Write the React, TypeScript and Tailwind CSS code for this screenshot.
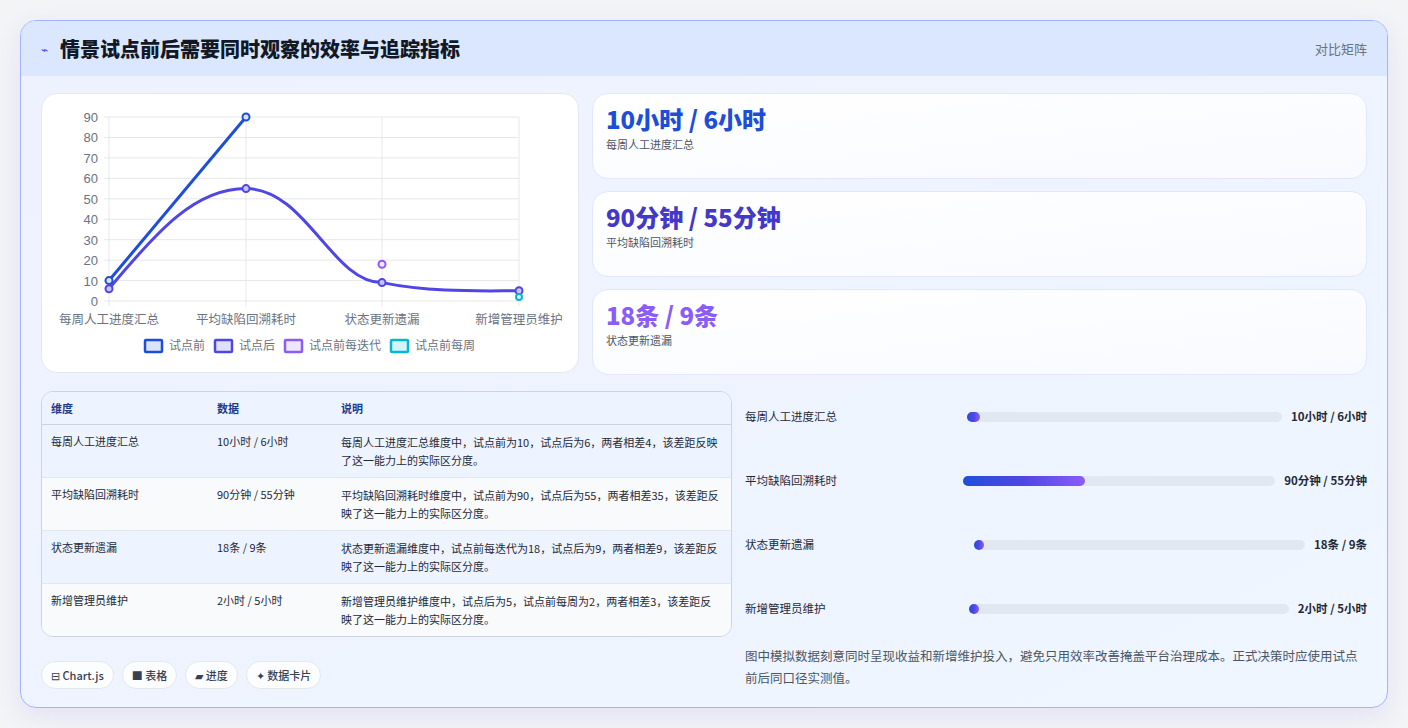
const font = { fontFamily: '"Noto Sans CJK SC", "Noto Sans", sans-serif' }

const stats = [
  { value: "10小时 / 6小时", label: "每周人工进度汇总", color: "text-[#1d4ed8]" },
  { value: "90分钟 / 55分钟", label: "平均缺陷回溯耗时", color: "text-[#4338ca]" },
  { value: "18条 / 9条", label: "状态更新遗漏", color: "text-[#8b5cf6]" },
]

const rows = [
  ["每周人工进度汇总", "10小时 / 6小时", "每周人工进度汇总维度中，试点前为10，试点后为6，两者相差4，该差距反映了这一能力上的实际区分度。"],
  ["平均缺陷回溯耗时", "90分钟 / 55分钟", "平均缺陷回溯耗时维度中，试点前为90，试点后为55，两者相差35，该差距反映了这一能力上的实际区分度。"],
  ["状态更新遗漏", "18条 / 9条", "状态更新遗漏维度中，试点前每迭代为18，试点后为9，两者相差9，该差距反映了这一能力上的实际区分度。"],
  ["新增管理员维护", "2小时 / 5小时", "新增管理员维护维度中，试点后为5，试点前每周为2，两者相差3，该差距反映了这一能力上的实际区分度。"],
]

const bars = [
  { label: "每周人工进度汇总", value: "10小时 / 6小时", pct: 4, ml: "ml-[0px]" },
  { label: "平均缺陷回溯耗时", value: "90分钟 / 55分钟", pct: 39, ml: "ml-[-4px]" },
  { label: "状态更新遗漏", value: "18条 / 9条", pct: 3, ml: "ml-[7px]" },
  { label: "新增管理员维护", value: "2小时 / 5小时", pct: 3, ml: "ml-[2px]" },
]

function Chart() {
  const xs = [67, 204, 340, 477]
  const y = (v: number) => 207 - v * 2.044
  const ticks = [0, 10, 20, 30, 40, 50, 60, 70, 80, 90]
  const cats = ["每周人工进度汇总", "平均缺陷回溯耗时", "状态更新遗漏", "新增管理员维护"]
  const after = [6, 55, 9, 5]
  const p = after.map((v, i) => [xs[i], y(v)])
  const curve = `M${p[0][0]},${p[0][1]} C${p[0][0] + 50},${p[0][1] - 60} ${p[1][0] - 50},${p[1][1]} ${p[1][0]},${p[1][1]} C${p[1][0] + 60},${p[1][1]} ${p[2][0] - 50},${p[2][1]} ${p[2][0]},${p[2][1]} C${p[2][0] + 50},${p[2][1] + 10} ${p[3][0] - 40},${p[3][1]} ${p[3][0]},${p[3][1]}`
  const legend = [
    { t: "试点前", c: "#1d4ed8", f: "#dbe4fb", x: 103 },
    { t: "试点后", c: "#4f46e5", f: "#e0e0fb", x: 173 },
    { t: "试点前每迭代", c: "#8b5cf6", f: "#efe7fd", x: 243 },
    { t: "试点前每周", c: "#06b6d4", f: "#d5f4f9", x: 349 },
  ]
  return (
    <svg width="538" height="280" className="block">
      {ticks.map((t) => (
        <g key={t}>
          <line x1={62} x2={477} y1={y(t)} y2={y(t)} stroke="#e5e7eb" />
          <text x={56} y={y(t) + 5} textAnchor="end" fontSize="13" fill="#6b7280" fontFamily="Liberation Sans, sans-serif">{t}</text>
        </g>
      ))}
      {xs.map((x) => (
        <line key={x} x1={x} x2={x} y1={23} y2={212} stroke="#e5e7eb" />
      ))}
      {cats.map((c, i) => (
        <text key={c} x={xs[i]} y={230} textAnchor="middle" fontSize="12.5" fill="#6b7280" style={font}>{c}</text>
      ))}
      <line x1={67} y1={y(10)} x2={204} y2={y(90)} stroke="#1d4ed8" strokeWidth="3" />
      <path d={curve} fill="none" stroke="#4f46e5" strokeWidth="3" />
      <circle cx={67} cy={y(10)} r="3.5" fill="#dbe4fb" stroke="#1d4ed8" strokeWidth="2" />
      <circle cx={204} cy={y(90)} r="3.5" fill="#dbe4fb" stroke="#1d4ed8" strokeWidth="2" />
      {p.map(([cx, cy], i) => (
        <circle key={i} cx={cx} cy={cy} r="3.5" fill="#c7c4f8" stroke="#4f46e5" strokeWidth="2" />
      ))}
      <circle cx={340} cy={y(18)} r="3.5" fill="#efe7fd" stroke="#8b5cf6" strokeWidth="2" />
      <circle cx={477} cy={y(2)} r="3" fill="#d5f4f9" stroke="#06b6d4" strokeWidth="2" />
      {legend.map((l) => (
        <g key={l.t}>
          <rect x={l.x} y={246} width={17} height={12} fill={l.f} stroke={l.c} strokeWidth="2.5" rx="1" />
          <text x={l.x + 24} y={256} fontSize="12" fill="#6b7280" style={font}>{l.t}</text>
        </g>
      ))}
    </svg>
  )
}

export default function App() {
  return (
    <div className="min-h-screen bg-[#f3f4f6] pt-5 px-5 pb-5" style={font}>
      <div className="rounded-2xl border border-[#a5b4fc] bg-gradient-to-br from-[#eef2ff] to-[#eff6ff] overflow-hidden shadow-[0_8px_24px_rgba(99,102,241,0.12)]">
        <div className="h-[55px] bg-[#dbe7fe] flex items-center justify-between pl-5 pr-5">
          <div className="flex items-center gap-3">
            <span className="text-[#4f46e5] text-xs">⌁</span>
            <h1 className="text-[20px] font-extrabold text-[#111827]">情景试点前后需要同时观察的效率与追踪指标</h1>
          </div>
          <span className="text-[13px] text-[#6b7280]">对比矩阵</span>
        </div>
        <div className="px-5 pt-[17px] pb-[18px]">
          <div className="flex gap-[13px]">
            <div className="w-[538px] h-[280px] rounded-2xl bg-white border border-[#e5e7eb] shrink-0">
              <Chart />
            </div>
            <div className="flex-1 flex flex-col gap-3">
              {stats.map((s) => (
                <div key={s.label} className="h-[86px] rounded-2xl bg-gradient-to-br from-white to-[#f8faff] border border-[#e0e7ff] px-[13px] pt-[9px]">
                  <div className={`text-[24px] font-extrabold leading-[32px] ${s.color}`}>{s.value}</div>
                  <div className="text-[11px] text-[#4b5563] mt-[1px]">{s.label}</div>
                </div>
              ))}
            </div>
          </div>
          <div className="flex gap-[13px] mt-4">
            <div className="w-[691px] shrink-0">
              <div className="rounded-xl border border-[#cbd5e1] overflow-hidden">
                <table className="w-full text-[11px] text-[#1f2937] border-collapse">
                  <thead>
                    <tr className="bg-[#eef4ff] border-b border-[#cbd5e1]">
                      <th className="text-left font-semibold text-[#1e3a8a] px-[9px] h-[32px] w-[166px]">维度</th>
                      <th className="text-left font-semibold text-[#1e3a8a] px-[9px] w-[124px]">数据</th>
                      <th className="text-left font-semibold text-[#1e3a8a] px-[9px]">说明</th>
                    </tr>
                  </thead>
                  <tbody>
                    {rows.map((r, i) => (
                      <tr key={r[0]} className={`h-[53px] ${i % 2 === 0 ? "bg-[#eef4ff]" : "bg-[#f8fafc]"} ${i < 3 ? "border-b border-[#e2e8f0]" : ""}`}>
                        <td className="align-top px-[9px] pt-[8px]">{r[0]}</td>
                        <td className="align-top px-[9px] pt-[8px]">{r[1]}</td>
                        <td className="align-top px-[9px] pt-[8px] pb-[6px] pr-[10px] leading-[18px]">{r[2]}</td>
                      </tr>
                    ))}
                  </tbody>
                </table>
              </div>
              <div className="flex gap-2 mt-[24px] text-[11px] text-[#374151]">
                {["⊟ Chart.js", "■ 表格", "▰ 进度", "✦ 数据卡片"].map((c) => (
                  <span key={c} className="rounded-full bg-white/80 border border-[#e5e7eb] px-[9px] h-[28px] flex items-center font-medium">{c}</span>
                ))}
              </div>
            </div>
            <div className="flex-1 flex flex-col pt-[-4px] -mt-[6px]">
              {bars.map((b) => (
                <div key={b.label} className="h-[64px] flex items-center text-[11.5px] text-[#1f2937]">
                  <span className="w-[222px] shrink-0">{b.label}</span>
                  <div className={`flex-1 h-[10px] rounded-full bg-[#e2e8f0] ${b.ml}`}>
                    <div className="h-full rounded-full bg-gradient-to-r from-[#1d4ed8] via-[#4f46e5] to-[#8b5cf6] min-w-[10px]" style={{ width: `${b.pct}%` }} />
                  </div>
                  <span className="ml-[9px] font-bold whitespace-nowrap">{b.value}</span>
                </div>
              ))}
              <p className="text-[12.5px] text-[#4b5563] leading-[22px] mt-[4px] pr-[2px]">图中模拟数据刻意同时呈现收益和新增维护投入，避免只用效率改善掩盖平台治理成本。正式决策时应使用试点前后同口径实测值。</p>
            </div>
          </div>
        </div>
      </div>
    </div>
  )
}
